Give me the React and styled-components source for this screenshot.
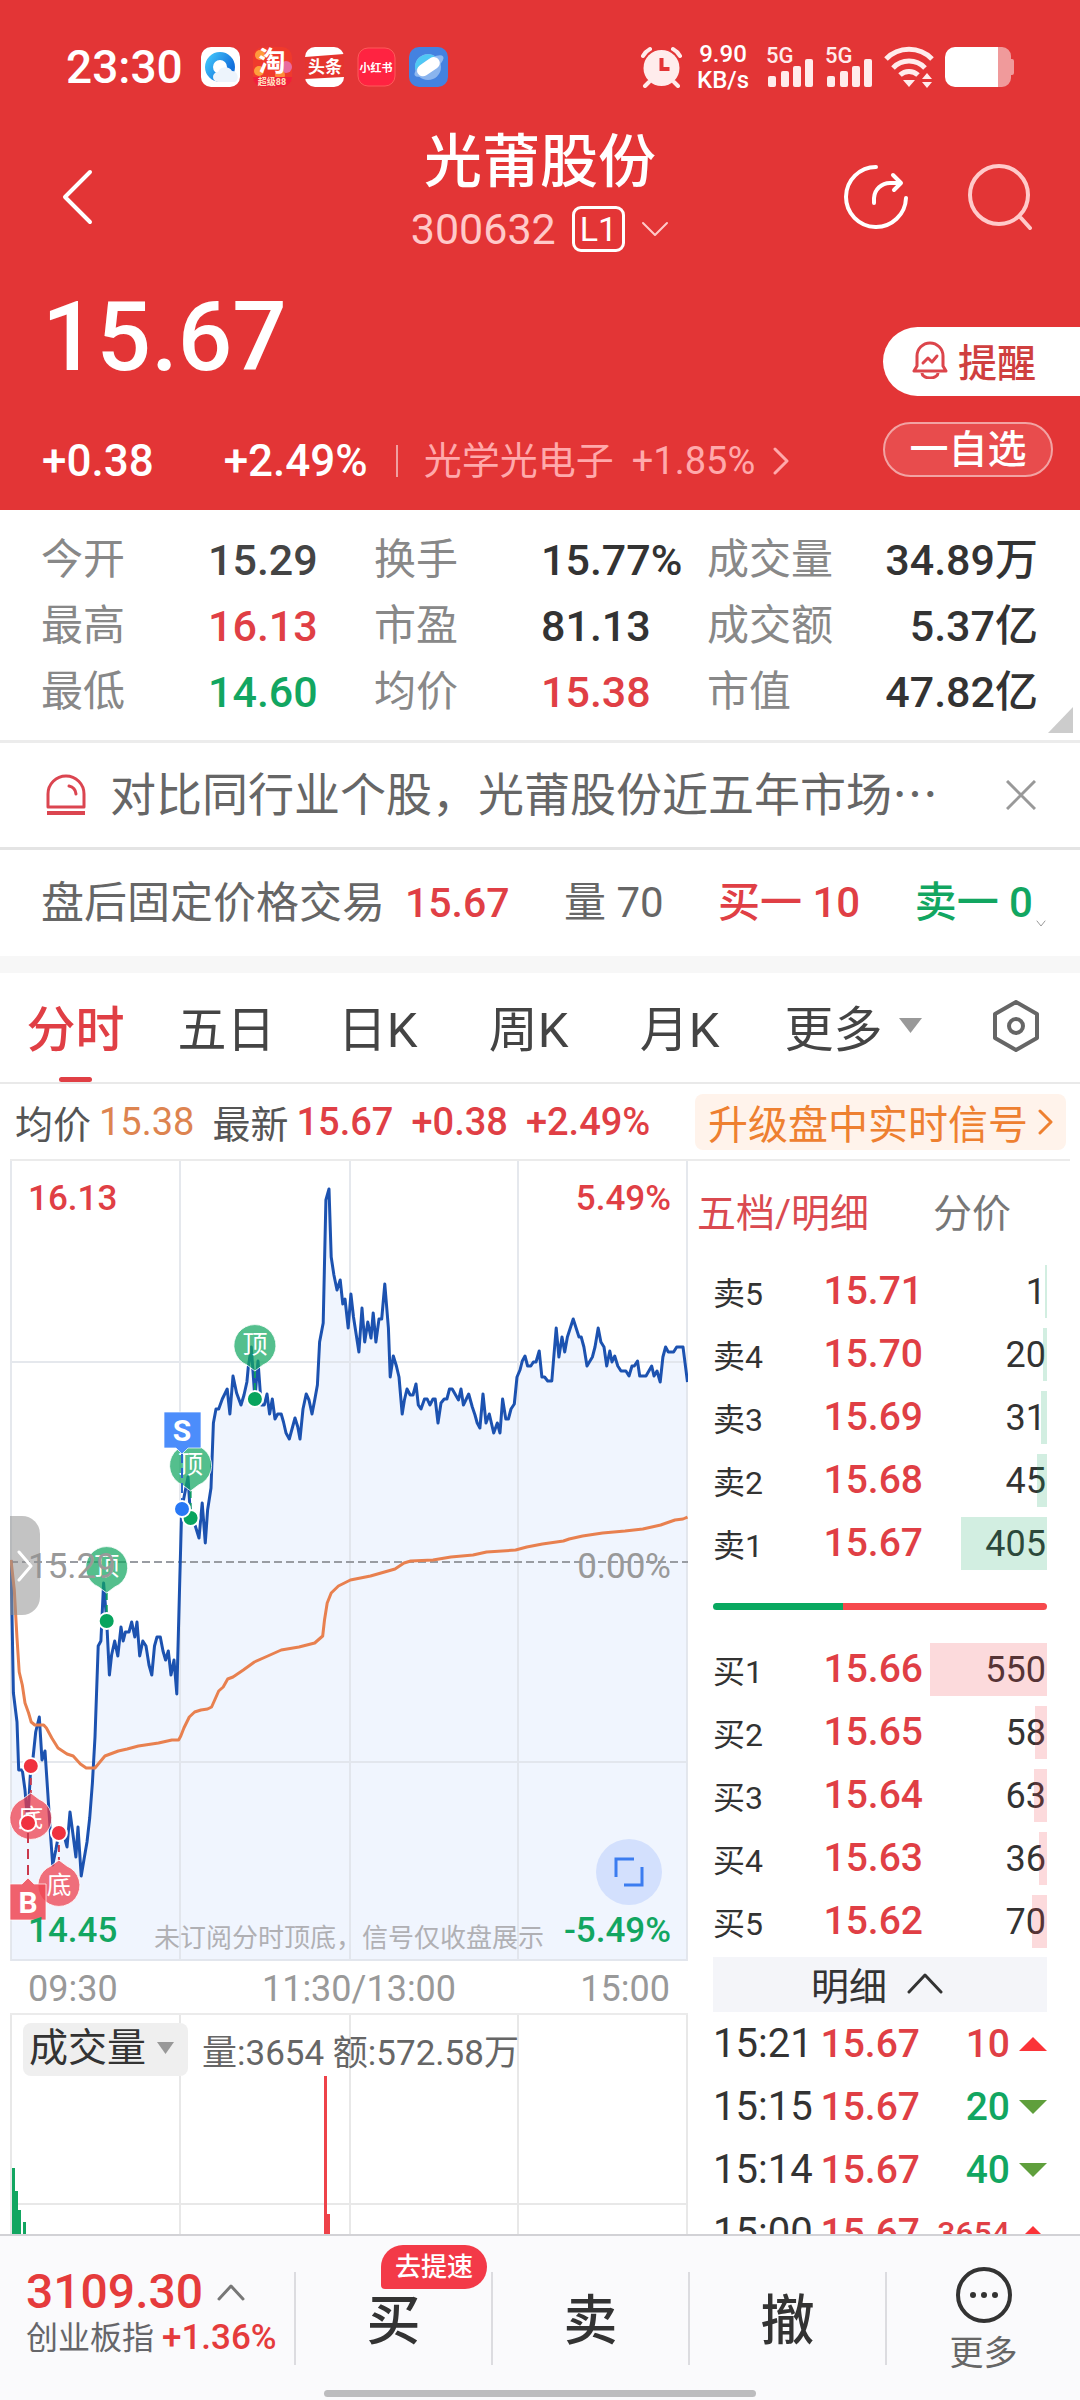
import React from 'react';
import styled, { createGlobalStyle } from 'styled-components';

const RED = '#e03f45';
const GREEN = '#12a661';

const GlobalStyle = createGlobalStyle`
  * {
    box-sizing: border-box;
  }

  body {
    margin: 0;
    background: #fff;
    color: #333;
    font-family: Roboto, 'Noto Sans CJK SC', sans-serif;
  }

  button, select {
    margin: 0;
    padding: 0;
    border: 0;
    background: none;
    color: inherit;
    font: inherit;
    cursor: pointer;
  }

  a {
    color: inherit;
    text-decoration: none;
  }

  svg {
    display: block;
    flex: none;
  }
`;

const Screen = styled.div`
  display: flex;
  flex-direction: column;
  height: 100vh;
`;

const Content = styled.main`
  flex: 1;
  min-height: 0;
  overflow: hidden;
`;

/* header */

const Header = styled.header`
  background: #e33536;
  color: #fff;
`;

const StatusBar = styled.div`
  display: flex;
  align-items: center;
  justify-content: space-between;
  padding: 40px 66px 32px;
`;

const StatusGroup = styled.div`
  display: flex;
  align-items: center;
  gap: ${({ $gap }) => $gap}px;
  height: 54px;
`;

const Clock = styled.time`
  margin-right: 5px;
  font-size: 46px;
  font-weight: 500;
`;

const NetSpeed = styled.div`
  margin: 0 6px 0 4px;
  font-size: 24px;
  font-weight: 500;
  line-height: 26px;
  text-align: center;
`;

const Nav = styled.nav`
  display: grid;
  grid-template-columns: 1fr auto 1fr;
  align-items: center;
  padding: 0 48px;
`;

const NavActions = styled.div`
  display: flex;
  justify-content: flex-end;
  gap: 60px;
`;

const IconButton = styled.button`
  display: flex;
  align-items: center;
`;

const BackButton = styled(IconButton)`
  padding-left: 14px;
`;

const Title = styled.div`
  padding-bottom: 8px;
  text-align: center;
`;

const StockName = styled.h1`
  margin: 0;
  font-size: 58px;
  font-weight: 500;
  line-height: 72px;
`;

const StockCode = styled.button`
  display: flex;
  align-items: center;
  justify-content: center;
  gap: 16px;
  width: 100%;
  color: #ffc9c9;
  font-size: 43px;
  line-height: 62px;
`;

const Level = styled.span`
  padding: 0 5px;
  border: 3px solid #fff;
  border-radius: 9px;
  color: #fff;
  font-size: 34px;
  line-height: 40px;
`;

const Quote = styled.section`
  display: flex;
  align-items: flex-start;
  justify-content: space-between;
  padding: 19px 0 25px 42px;
`;

const Price = styled.div`
  font-size: 96px;
  font-weight: 500;
  line-height: 100px;
`;

const Change = styled.div`
  display: flex;
  align-items: center;
  margin-top: 50px;
  font-size: 44px;
  font-weight: 500;
  line-height: 48px;

  span + span {
    margin-left: 70px;
  }
`;

const Sector = styled.a`
  display: flex;
  align-items: center;
  gap: 18px;
  height: 32px;
  margin-left: 28px;
  padding-left: 26px;
  border-left: 2px solid #f0a0a0;
  color: #ffa9ab;
  font-size: 38px;
  font-weight: 400;
`;

const QuoteActions = styled.div`
  display: flex;
  flex-direction: column;
  gap: 26px;
  width: 197px;
  margin-top: 40px;
`;

const RemindButton = styled.button`
  display: flex;
  align-items: center;
  gap: 10px;
  height: 69px;
  padding: 0 0 4px 29px;
  border-radius: 35px 0 0 35px;
  background: #fff;
  color: #cf3f3f;
  font-size: 39px;
  font-weight: 500;
`;

const WatchButton = styled.button`
  height: 55px;
  margin-right: 27px;
  border: 2px solid #f2a3a3;
  border-radius: 28px;
  background: #e84c4d;
  font-size: 39px;
  font-weight: 500;
  line-height: 50px;
`;

/* key figures */

const Stats = styled.dl`
  position: relative;
  display: grid;
  grid-template-columns: 333fr 333fr 331fr;
  margin: 0;
  padding: 17px 42px 15px 41px;
  border-bottom: 3px solid #ececec;
  line-height: 66px;
`;

const Stat = styled.div`
  display: grid;
  grid-template-columns: 167px 1fr;

  &:nth-child(3n) dd {
    text-align: right;
  }
`;

const StatName = styled.dt`
  color: #888;
  font-size: 42px;
`;

const StatValue = styled.dd`
  margin: 0;
  color: ${({ $color }) => $color || '#333'};
  font-size: 43px;
  font-weight: 500;
  white-space: nowrap;
`;

const Corner = styled.svg`
  position: absolute;
  right: 7px;
  bottom: 7px;
`;

const Notice = styled.section`
  display: flex;
  align-items: center;
  padding: 0 44px 0 45px;
  border-bottom: 3px solid #e4e4e4;
`;

const NoticeText = styled.p`
  flex: 1;
  margin: 0 0 0 23px;
  padding-bottom: 8px;
  color: #666;
  font-family: 'Noto Sans CJK SC', sans-serif;
  font-size: 46px;
  line-height: 96px;
`;

const AfterHours = styled.section`
  display: flex;
  align-items: center;
  justify-content: space-between;
  padding: 0 34px 0 41px;
  border-bottom: 17px solid #f7f7f7;
  color: #666;
  font-size: 42px;
  line-height: 106px;
`;

const FixedLabel = styled.span`
  display: flex;
  gap: 20px;
  font-size: 43px;
`;

const Figure = styled.span`
  color: ${({ $color }) => $color};
  font-weight: ${({ $color }) => ($color ? 500 : 400)};
`;

const FixedPrice = styled(Figure)`
  font-size: 41px;
`;

const FixedZero = styled.span`
  display: flex;
  align-items: center;
  gap: 3px;

  svg {
    margin-top: 40px;
  }
`;

/* period tabs */

const Tabs = styled.nav`
  display: grid;
  grid-template-columns: repeat(5, 151fr) 196fr 129fr;
  border-bottom: 2px solid #e9e9e9;
`;

const Tab = styled.button`
  display: flex;
  align-items: center;
  justify-content: center;
  gap: 16px;
  position: relative;
  height: 109px;
  padding-bottom: 4px;
  color: ${({ $active }) => ($active ? RED : '#444')};
  font-size: 49px;
  font-weight: ${({ $active }) => ($active ? 500 : 400)};

  &::after {
    content: '';
    display: ${({ $active }) => ($active ? 'block' : 'none')};
    position: absolute;
    bottom: 0;
    width: 33px;
    height: 5px;
    border-radius: 3px;
    background: ${RED};
  }
`;

const Summary = styled.div`
  display: flex;
  align-items: center;
  height: 75px;
  padding: 0 14px 0 15px;
  color: #555;
  font-size: 38px;
  white-space: nowrap;
`;

const SummaryValue = styled.span`
  margin-right: 18px;
  margin-left: ${({ $labelled }) => ($labelled ? 8 : 0)}px;
  color: ${({ $color }) => $color};
  font-weight: ${({ $bold }) => ($bold ? 500 : 400)};
`;

const Upgrade = styled.a`
  display: flex;
  align-items: center;
  gap: 10px;
  height: 56px;
  margin-left: auto;
  padding: 0 13px;
  border-radius: 8px;
  background: #fff3eb;
  color: #ee8030;
  font-size: 40px;
`;

/* chart and order book */

const Board = styled.div`
  display: grid;
  grid-template-columns: 678fr 382fr;
  margin: 0 10px;
  border-top: 2px solid #ebebeb;
`;

const ChartBox = styled.div`
  position: relative;
`;

const FullWidthSvg = styled.svg`
  width: 100%;
  height: auto;
`;

const Drawer = styled.button`
  display: flex;
  align-items: center;
  justify-content: center;
  position: absolute;
  top: 355px;
  left: 0;
  width: 30px;
  height: 99px;
  border-radius: 0 18px 18px 0;
  background: rgba(145, 145, 145, 0.55);
`;

const Expand = styled.button`
  display: flex;
  align-items: center;
  justify-content: center;
  position: absolute;
  right: 26px;
  bottom: 56px;
  width: 66px;
  height: 66px;
  border-radius: 50%;
  background: #d3e0fd;
`;

const TimeAxis = styled.div`
  display: flex;
  justify-content: space-between;
  padding: 4px 18px 0;
  border-bottom: 2px solid #ebebeb;
  color: #999;
  font-size: 36px;
  line-height: 48px;
`;

const MiddleTime = styled.time`
  margin-left: 20px;
`;

const VolumeHead = styled.div`
  display: flex;
  align-items: center;
  gap: 14px;
  position: absolute;
  top: 8px;
  left: 13px;
  color: #666;
  font-size: 35px;
  white-space: nowrap;
`;

const SelectWrap = styled.label`
  display: flex;
  align-items: center;
  gap: 10px;
  height: 53px;
  padding: 0 14px 3px 6px;
  border-radius: 8px;
  background: #efefef;
  color: #333;
`;

const IndicatorSelect = styled.select`
  appearance: none;
  font-size: 39px;
  outline: none;
`;

const Book = styled.aside`
  padding: 0 23px 0 25px;
`;

const BookTabs = styled.div`
  display: flex;
  gap: 64px;
  height: 99px;
  margin-left: -16px;
  padding-bottom: 2px;
`;

const BookTab = styled.button`
  color: ${({ $active }) => ($active ? '#da4a50' : '#777')};
  font-size: 39px;
  white-space: nowrap;
`;

const BookTable = styled.table`
  width: 100%;
  border-collapse: collapse;
  table-layout: fixed;
`;

const BookRow = styled.tr`
  height: 63px;
`;

const Side = styled.th`
  width: 88px;
  padding: 0 0 2px;
  font-size: 32px;
  font-weight: 400;
  text-align: left;
`;

const BookPrice = styled.td`
  width: 122px;
  padding: 0 0 2px;
  color: ${RED};
  font-size: 39px;
  font-weight: 500;
  text-align: right;
`;

const Amount = styled.td`
  position: relative;
  padding: 0 1px 0 0;
  font-size: 36px;
  text-align: right;
`;

const Depth = styled.span`
  position: absolute;
  top: 5px;
  right: 0;
  height: 53px;
  background: ${({ $buy }) => ($buy ? 'rgba(240, 60, 70, 0.19)' : 'rgba(18, 166, 97, 0.19)')};
`;

const Ratio = styled.div`
  height: 7px;
  margin: 28px 0;
  border-radius: 4px;
  background: linear-gradient(to right, #08a860 39%, #f6494d 39%);
`;

const DetailToggle = styled.button`
  display: flex;
  align-items: center;
  justify-content: center;
  gap: 20px;
  width: 100%;
  height: 55px;
  margin-top: 4px;
  padding: 0 6px 2px 0;
  background: #f4f5f9;
  font-size: 38px;
`;

const Tick = styled.tr`
  height: 63px;
  font-size: 39px;
  text-align: right;

  td {
    padding: 0;
    white-space: nowrap;
  }
`;

const TickTime = styled.td`
  width: 100px;
  font-size: 40px;
  text-align: left;
`;

const TickPrice = styled.td`
  width: 107px;
  color: ${RED};
  font-weight: 500;
`;

const TickAmount = styled.td`
  color: ${({ $up }) => ($up ? RED : GREEN)};
  font-size: ${({ $long }) => ($long ? 32 : 39)}px;
  font-weight: 500;
`;

const TickArrow = styled.td`
  width: 37px;

  svg {
    margin-left: 9px;
  }
`;

/* trade bar */

const TradeBar = styled.footer`
  position: relative;
  display: grid;
  grid-template-columns: 294fr repeat(3, 197fr) 195fr;
  height: 166px;
  padding-top: 36px;
  border-top: 2px solid #d2d2d6;
  background: #fafafc;
`;

const TradeCell = styled.div`
  display: flex;
  justify-content: center;
  position: relative;
  height: 93px;

  & + & {
    border-left: 2px solid #dcdce0;
  }
`;

const IndexLink = styled.a`
  display: block;
  width: 100%;
  padding-left: 26px;
  white-space: nowrap;
`;

const IndexPrice = styled.div`
  display: flex;
  align-items: center;
  gap: 14px;
  color: #e53b3c;
  font-size: 48px;
  font-weight: 500;
  line-height: 40px;
`;

const IndexName = styled.div`
  margin-top: 6px;
  color: #66666a;
  font-size: 32px;
  line-height: 40px;

  span {
    color: #e53b3c;
    font-size: 35px;
    font-weight: 500;
  }
`;

const TradeButton = styled.button`
  width: 100%;
  padding-bottom: 4px;
  font-size: 54px;
  font-weight: 500;
`;

const SpeedTag = styled.span`
  position: absolute;
  top: -27px;
  left: 85px;
  padding: 0 14px;
  border-radius: 22px 22px 22px 4px;
  background: #f33a48;
  color: #fff;
  font-size: 26px;
  font-weight: 500;
  line-height: 44px;
  white-space: nowrap;
`;

const MoreButton = styled.button`
  display: flex;
  flex-direction: column;
  align-items: center;
  align-self: flex-start;
  gap: 6px;
  margin-top: -5px;
  color: #666;
  font-size: 34px;
  line-height: 48px;
`;

const HomeBar = styled.div`
  position: absolute;
  bottom: 3px;
  left: 30%;
  width: 40%;
  height: 7px;
  border-radius: 4px;
  background: #bcbcbe;
`;

const stats = [
  ['今开', '15.29', '#444'],
  ['换手', '15.77%'],
  ['成交量', '34.89万'],
  ['最高', '16.13', RED],
  ['市盈', '81.13'],
  ['成交额', '5.37亿'],
  ['最低', '14.60', GREEN],
  ['均价', '15.38', RED],
  ['市值', '47.82亿'],
];

const asks = [
  ['卖5', '15.71', 1, 2],
  ['卖4', '15.70', 20, 4],
  ['卖3', '15.69', 31, 6],
  ['卖2', '15.68', 45, 10],
  ['卖1', '15.67', 405, 86],
];

const bids = [
  ['买1', '15.66', 550, 117],
  ['买2', '15.65', 58, 12],
  ['买3', '15.64', 63, 13],
  ['买4', '15.63', 36, 8],
  ['买5', '15.62', 70, 15],
];

const ticks = [
  ['15:21', '15.67', '10', true],
  ['15:15', '15.67', '20', false],
  ['15:14', '15.67', '40', false],
  ['15:00', '15.67', '3654', true],
];

const priceLine =
  '1,399 3.4,532 7,561 8.7,609 12.3,609 15,629 17.7,662 20.8,605 23,597 25.7,571 29.3,556 32,599 35,590 37.8,632 ' +
  '40.4,672 42.7,704 45.8,689 48.9,672 54.7,677 57,686 60,651 62.8,672 65.9,696 68,666 71.2,715 73.9,699 77,681 ' +
  '79.7,657 82.4,622 85,576 88.2,485 90.9,480 93.6,422 96.7,460 99.4,514 101.6,494 104.7,480 107.8,495 111,466 ' +
  '113.2,480 115.4,471 119,471 121.7,461 124.8,476 127,461 129.7,495 132.8,480 136,485 139,504 141.8,514 ' +
  '144.5,485 147,476 150.3,476 153,490 155.6,499 158.3,490 161,514 164,499 166.8,533 169.9,414 171.7,348 178,316 ' +
  '180.6,357 185,364 189,377 192.2,342 195.3,382 197.6,349 201,327 203.4,262 206,248 208.7,248 212.3,238 ' +
  '217.2,228 219.9,253 223,215 226.6,232 231,244 234,234 236.9,221 238.2,207 241.3,186 244.9,238 248,200 ' +
  '251.2,244 254.3,244 257,233 259.6,253 262.3,238 265,258 267.7,253 271.2,253 273.5,261 276,272 279.3,278 ' +
  '285,257 287.8,266 290,278 293,248 296.2,233 299,239 302,253 304.7,239 307.4,224 309.6,181 313.2,162 315.9,39 ' +
  '319,28 321.2,96 323.9,114 327,129 330.2,119 332.8,143 335,138 338.2,167 340.9,133 343.5,156 348.9,191 352,147 ' +
  '354.7,181 357.8,161 361,177 363.2,152 365.9,181 369,158 371.7,158 374.8,123 378.4,167 380.2,216 383.3,195 ' +
  '386.4,205 389,216 392.2,253 394.4,239 397,228 400.2,234 403,234 406,223 408.3,244 411,248 414.5,238 ' +
  '417.2,238 419.9,244 423,238 425.2,238 428,262 431,242 434.2,238 436.9,238 439.5,228 442.2,228 448.5,239 ' +
  '451,228 453.4,244 458.7,233 462.3,246 465,254 467.2,262 469.9,267 473,233 476,262 479.3,253 483.7,272 ' +
  '487.3,262 490,272 492.6,238 495.8,258 498.4,258 501,248 504.3,243 507,216 510,209 512.3,200 515,195 ' +
  '517.6,205 520.8,205 523.4,201 526,201 529.2,190 531.9,216 534.6,216 537.7,220 541.8,220 546.2,167 548.9,196 ' +
  '552,176 554.7,191 557.4,176 563.2,158 569,176 571.2,176 573.9,186 577,205 582.4,196 585,186 588.2,167 ' +
  '590.9,181 594,186 596.7,205 599.8,190 602,201 604.7,195 607.8,205 611,210 615.9,210 619,215 622,205 ' +
  '624.3,205 627.5,200 629.7,215 636,215 641.7,205 644,215 647,210 650.2,221 652.9,196 655.6,186 658.3,191 ' +
  '663.6,191 666.7,186 673,186 677.5,221';

const averageLine =
  '1,399 4.3,429 7,477 9.2,511 12.3,524 15,542 18.6,552 21.2,561 24.8,564 33.7,564 36.4,567 41.8,577 48,587 ' +
  '57,593 63.2,595 70.4,603 76.2,607 85,607 89.1,602 94.9,595 108.3,590 117.2,588 128.4,585 148.5,582 161.9,579 ' +
  '168.6,579 170.8,575 173.9,567 179.3,556 184.6,551 190.9,549 197.6,548 201.6,546 208.7,530 213.2,526 ' +
  '217.7,518 223,516 233.3,509 244.4,501 257.8,495 271.2,489 289,486 304.7,482 312.7,475 314.5,459 317.2,442 ' +
  '321.2,432 328.4,425 340.4,419 360.5,415 385,408 394,402 400.7,400 423,399 440.9,396 463,394 476.6,391 ' +
  '505.6,389 516.8,386 532.4,383 553.4,380 559.2,378 572.6,375 592.6,372 615,370 632.8,368 650.7,364 665,359 ' +
  '673,358 677.5,356';

const tops = [
  [244.9, 184, 238],
  [180.6, 304, 357],
  [96.7, 406, 460],
];

const bottoms = [
  [20.8, 658, 605],
  [48.9, 725, 672],
];

const Chevron = ({ w, h, points, color = 'currentColor', stroke = 3 }) => (
  <svg width={w} height={h} viewBox={`0 0 ${w} ${h}`} fill="none">
    <polyline points={points} stroke={color} strokeWidth={stroke} strokeLinecap="round" strokeLinejoin="round" />
  </svg>
);

const Triangle = ({ w, h, up, color = '#999' }) => (
  <svg width={w} height={h} viewBox={`0 0 ${w} ${h}`}>
    <polygon points={up ? `0,${h} ${w},${h} ${w / 2},0` : `0,0 ${w},0 ${w / 2},${h}`} fill={color} />
  </svg>
);

const AppIcons = () => (
  <>
    <svg width="39" height="40" viewBox="0 0 39 40">
      <defs>
        <linearGradient id="ring" x1="0" y1="0" x2="1" y2="0.6">
          <stop offset="0" stopColor="#3fc0f8" />
          <stop offset="1" stopColor="#1270dc" />
        </linearGradient>
      </defs>
      <rect width="39" height="40" rx="10" fill="#fff" />
      <circle cx="19" cy="20" r="11" fill="none" stroke="url(#ring)" strokeWidth="8" />
      <path d="M17 35a5 5 0 0 1 0-10 8 8 0 0 1 14-1 6 6 0 0 1 3 11z" fill="#edf4fc" />
    </svg>
    <svg width="39" height="40" viewBox="0 0 39 40">
      <rect width="39" height="40" rx="10" fill="#ef3a2c" />
      <circle cx="7" cy="8" r="5" fill="#ff9a3c" />
      <circle cx="33" cy="20" r="6" fill="#e86ba0" />
      <circle cx="6" cy="24" r="5" fill="#ffa03c" />
      <circle cx="27" cy="28" r="5" fill="#ff8a3c" />
      <path d="M0 30h39a10 10 0 0 1-10 10H10A10 10 0 0 1 0 30z" fill="#f01f3c" />
      <text x="19" y="24" fontSize="27" fontWeight="700" fill="#fff" textAnchor="middle">淘</text>
      <text x="19" y="38" fontSize="9" fontWeight="700" fill="#ffe3c0" textAnchor="middle">超级88</text>
    </svg>
    <svg width="39" height="40" viewBox="0 0 39 40">
      <rect width="39" height="40" rx="10" fill="#fff" />
      <path d="M0 10l39-3v23L0 32z" fill="#e5352f" />
      <text x="20" y="26" fontSize="17" fontWeight="700" fill="#fff" textAnchor="middle">头条</text>
    </svg>
    <svg width="39" height="40" viewBox="0 0 39 40">
      <rect x="1" y="1" width="37" height="38" rx="10" fill="#ff2341" stroke="#ff5a5a" />
      <text x="19" y="25" fontSize="11" fontWeight="700" fill="#fff" textAnchor="middle">小红书</text>
    </svg>
    <svg width="39" height="40" viewBox="0 0 39 40">
      <rect width="39" height="40" rx="10" fill="#4482e0" />
      <circle cx="19" cy="20" r="13" fill="#8ab4ee" />
      <path d="M6 21A13 13 0 0 1 28 11L8 27z" fill="#4fc8f4" />
      <ellipse cx="20" cy="19" rx="17" ry="6" fill="#8fb8f0" transform="rotate(-34 20 19)" />
      <rect x="7" y="14" width="25" height="12" rx="6" fill="#fff" transform="rotate(-34 19 20)" />
    </svg>
  </>
);

const AlarmIcon = () => (
  <svg width="41" height="42" viewBox="0 0 41 42">
    <path
      d="M2 10A17 17 0 0 1 9 3M39 10A17 17 0 0 0 32 3M8 36l-4 4M33 36l4 4"
      fill="none"
      stroke="#ffecec"
      strokeWidth="4"
      strokeLinecap="round"
    />
    <circle cx="20.500" cy="22" r="18" fill="#ffecec" />
    <path d="M20.500 12v11h8" fill="none" stroke="#e33536" strokeWidth="4" />
  </svg>
);

const Signal = () => (
  <svg width="48" height="54" viewBox="0 -6 48 54">
    <text x="0" y="17" fontSize="22" fontWeight="500" fill="#ffecec">5G</text>
    <g fill="#ffecec">
      <rect x="2" y="30" width="8" height="11" rx="2" />
      <rect x="15" y="25" width="8" height="16" rx="2" />
      <rect x="27" y="20" width="8" height="21" rx="2" />
      <rect x="39" y="13" width="8" height="28" rx="2" />
    </g>
  </svg>
);

const WifiIcon = () => (
  <svg width="50" height="42" viewBox="0 0 50 42" fill="none" stroke="#ffecec" strokeWidth="5">
    <path d="M2 13a32 32 0 0 1 46 0" />
    <path d="M9 22a22 22 0 0 1 32 0" />
    <path d="M16 29a13 13 0 0 1 18 0" />
    <path d="M19 34h12l-6 7z" fill="#ffecec" stroke="none" />
    <path d="M38 33l5-6 5 6zM38 36h10l-5 6z" fill="#ffecec" stroke="none" />
  </svg>
);

const BatteryIcon = () => (
  <svg width="69" height="40" viewBox="0 0 69 40">
    <path d="M53 0h4a9 9 0 0 1 9 9v3h1a2 2 0 0 1 2 2v12a2 2 0 0 1-2 2h-1v3a9 9 0 0 1-9 9h-4z" fill="#f09a9b" />
    <path d="M10 0h43v40H10A10 10 0 0 1 0 30V10A10 10 0 0 1 10 0z" fill="#fff" />
  </svg>
);

const ShareIcon = () => (
  <svg width="64" height="66" viewBox="0 0 64 66" fill="none" stroke="#fff" strokeWidth="4" strokeLinecap="round" strokeLinejoin="round">
    <path d="M32 3A30 30 0 1 0 62 34" />
    <path d="M30 39V34A16 16 0 0 1 46 19H56" />
    <path d="M49 11l8 8-7 7" />
  </svg>
);

const SearchIcon = () => (
  <svg width="64" height="66" viewBox="0 0 64 66" fill="none" stroke="#ffcaca" strokeWidth="4" strokeLinecap="round">
    <circle cx="31" cy="31" r="29" />
    <path d="M53 54l9 10" />
  </svg>
);

const BellIcon = () => (
  <svg width="36" height="38" viewBox="0 0 36 38" fill="none" stroke="#dc454b" strokeWidth="3" strokeLinejoin="round">
    <path d="M2 30h32l-3-5V15a13 13 0 0 0-26 0v10z" />
    <path d="M10 32a8 5 0 0 0 16 0" />
    <path d="M11 22l5-5 4 4 5-6" strokeLinecap="round" />
  </svg>
);

const SirenIcon = () => (
  <svg width="42" height="42" viewBox="0 0 42 42" fill="none" stroke="#db4550" strokeWidth="3">
    <path d="M3 33V20a18 18 0 0 1 36 0v13z" strokeLinejoin="round" />
    <path d="M24 12a9 9 0 0 1 7 8" strokeLinecap="round" />
    <path d="M2 39h38" strokeWidth="4" />
  </svg>
);

const SettingsIcon = () => (
  <svg width="48" height="52" viewBox="0 0 48 52" fill="none" stroke="#666" strokeWidth="4" strokeLinejoin="round">
    <path d="M24 2L45 14V38L24 50L3 38V14z" />
    <circle cx="24" cy="26" r="7" />
  </svg>
);

const Dot = ({ x, y, color }) => <circle cx={x} cy={y} r="8" fill={color} stroke="#fff" strokeWidth="2" />;

const TopMark = ({ x, y, dot }) => (
  <g>
    <line x1={x} y1={y + 26} x2={x} y2={dot} stroke="#0c9a63" strokeWidth="2" strokeDasharray="7 5" />
    <path
      d={`M${x - 8} ${y + 20}A21 21 0 1 1 ${x + 8} ${y + 20}L${x} ${y + 26}z`}
      fill="#12a661"
      fillOpacity="0.72"
      stroke="#fff"
      strokeOpacity="0.8"
    />
    <text x={x} y={y + 8} fontSize="25" fill="#fff" textAnchor="middle">顶</text>
    <Dot x={x} y={dot} color="#08a45e" />
  </g>
);

const BottomMark = ({ x, y, dot }) => (
  <g>
    <line x1={x} y1={dot} x2={x} y2={y - 26} stroke="#c9394d" strokeWidth="2" strokeDasharray="7 5" />
    <path
      d={`M${x - 8} ${y - 20}A21 21 0 1 0 ${x + 8} ${y - 20}L${x} ${y - 26}z`}
      fill="#ee3a48"
      fillOpacity="0.72"
      stroke="#fff"
      strokeOpacity="0.8"
    />
    <text x={x} y={y + 8} fontSize="25" fill="#fff" textAnchor="middle">底</text>
    <Dot x={x} y={dot} color="#f0323f" />
  </g>
);

const PriceChart = () => (
  <FullWidthSvg viewBox="0 0 678 800">
    <polygon points={`${priceLine} 677.5,800 1,800`} fill="#f0f5fe" />
    <g stroke="#dfe2e8" strokeOpacity="0.8" strokeWidth="2">
      <path d="M1 0V800M170 0V800M340 0V800M508 0V800M677 0V800M0 201H678M0 601H678M0 799H678" />
    </g>
    <line x1="0" y1="401" x2="678" y2="401" stroke="#999ca2" strokeWidth="2" strokeDasharray="8 4" />
    <polyline points={priceLine} fill="none" stroke="#1c52b0" strokeWidth="3" strokeLinejoin="round" />
    <polyline points={averageLine} fill="none" stroke="#e8804f" strokeWidth="3" strokeLinejoin="round" />

    {tops.map(([x, y, dot]) => (
      <TopMark key={x} x={x} y={y} dot={dot} />
    ))}
    {bottoms.map(([x, y, dot]) => (
      <BottomMark key={x} x={x} y={y} dot={dot} />
    ))}

    <line x1="172" y1="292" x2="172" y2="348" stroke="#2c66c8" strokeWidth="2" strokeDasharray="10 5" />
    <path d="M154 251h37v36h-13l-6 6l-6-6h-12z" fill="#4c8dfb" stroke="#fff" strokeOpacity="0.7" />
    <text x="172" y="280" fontSize="30" fontWeight="700" fill="#fff" textAnchor="middle">S</text>
    <Dot x={172} y={348} color="#2878f5" />

    <line x1="18" y1="672" x2="18" y2="717" stroke="#c9394d" strokeWidth="2" strokeDasharray="10 6" />
    <path d="M0 723h12l6-6l6 6h12v36h-36z" fill="#f04654" fillOpacity="0.85" stroke="#fff" strokeOpacity="0.7" />
    <text x="18" y="752" fontSize="30" fontWeight="700" fill="#fff" textAnchor="middle">B</text>
    <Dot x={18} y={662} color="#f0323f" />

    <g fontSize="35" fontWeight="500">
      <text x="18" y="49" fill={RED}>16.13</text>
      <text x="661" y="49" fill={RED} textAnchor="end">5.49%</text>
      <text x="18" y="417" fill="#999" fontWeight="400">15.29</text>
      <text x="661" y="417" fill="#999" fontWeight="400" textAnchor="end">0.00%</text>
      <text x="18" y="781" fill={GREEN}>14.45</text>
      <text x="661" y="781" fill={GREEN} textAnchor="end">-5.49%</text>
    </g>
    <text x="144" y="786" fontSize="26" fill="#b0b0b4">未订阅分时顶底，信号仅收盘展示</text>
  </FullWidthSvg>
);

const VolumeChart = () => (
  <FullWidthSvg viewBox="0 0 678 270">
    <path
      d="M1 0V270M170 0V270M340 0V270M508 0V270M677 0V270M0 189H678"
      stroke="#e8e8e8"
      strokeWidth="2"
    />
    <g fill="#12a661">
      <rect x="2" y="153" width="3" height="117" />
      <rect x="5" y="176" width="3" height="94" />
      <rect x="8" y="195" width="3" height="75" />
      <rect x="13" y="207" width="3" height="63" />
    </g>
    <g fill="#ee4249">
      <rect x="314" y="61" width="3" height="209" />
      <rect x="317" y="199" width="3" height="71" />
    </g>
  </FullWidthSvg>
);

const BookSide = ({ rows, buy }) => (
  <BookTable>
    <tbody>
      {rows.map(([side, price, amount, depth]) => (
        <BookRow key={side}>
          <Side scope="row">{side}</Side>
          <BookPrice>{price}</BookPrice>
          <Amount>
            {amount}
            <Depth $buy={buy} style={{ width: depth }} />
          </Amount>
        </BookRow>
      ))}
    </tbody>
  </BookTable>
);

const App = () => {
  return (
    <Screen>
      <GlobalStyle />
      <Content>
        <Header>
          <StatusBar>
            <StatusGroup $gap={13}>
              <Clock>23:30</Clock>
              <AppIcons />
            </StatusGroup>
            <StatusGroup $gap={11}>
              <AlarmIcon />
              <NetSpeed>
                9.90
                <br />
                KB/s
              </NetSpeed>
              <Signal />
              <Signal />
              <WifiIcon />
              <BatteryIcon />
            </StatusGroup>
          </StatusBar>

          <Nav>
            <BackButton aria-label="返回">
              <Chevron w={32} h={56} points="28,3 3,28 28,53" stroke={4} />
            </BackButton>
            <Title>
              <StockName>光莆股份</StockName>
              <StockCode>
                300632 <Level>L1</Level>
                <Chevron w={28} h={16} points="2,2 14,14 26,2" stroke={2} />
              </StockCode>
            </Title>
            <NavActions>
              <IconButton aria-label="分享">
                <ShareIcon />
              </IconButton>
              <IconButton aria-label="搜索">
                <SearchIcon />
              </IconButton>
            </NavActions>
          </Nav>

          <Quote>
            <div>
              <Price>15.67</Price>
              <Change>
                <span>+0.38</span>
                <span>+2.49%</span>
                <Sector href="#sector">
                  光学光电子
                  <div>+1.85%</div>
                  <Chevron w={17} h={28} points="2,2 14,14 2,26" />
                </Sector>
              </Change>
            </div>
            <QuoteActions>
              <RemindButton>
                <BellIcon />
                提醒
              </RemindButton>
              <WatchButton>一自选</WatchButton>
            </QuoteActions>
          </Quote>
        </Header>

        <Stats>
          {stats.map(([name, value, color]) => (
            <Stat key={name}>
              <StatName>{name}</StatName>
              <StatValue $color={color}>{value}</StatValue>
            </Stat>
          ))}
          <Corner width="25" height="26" viewBox="0 0 25 26">
            <polygon points="25,0 25,26 0,26" fill="#ccc" />
          </Corner>
        </Stats>

        <Notice>
          <SirenIcon />
          <NoticeText>对比同行业个股，光莆股份近五年市场…</NoticeText>
          <IconButton aria-label="关闭">
            <svg width="30" height="30" viewBox="0 0 30 30">
              <path d="M1 1L29 29M29 1L1 29" stroke="#999" strokeWidth="3" />
            </svg>
          </IconButton>
        </Notice>

        <AfterHours>
          <FixedLabel>
            盘后固定价格交易
            <FixedPrice $color={RED}>15.67</FixedPrice>
          </FixedLabel>
          <Figure>量 70</Figure>
          <Figure $color={RED}>买一 10</Figure>
          <FixedZero>
            <Figure $color={GREEN}>卖一 0</Figure>
            <Chevron w={10} h={7} points="1,1 5,6 9,1" stroke={1} color="#999" />
          </FixedZero>
        </AfterHours>

        <Tabs>
          <Tab $active>分时</Tab>
          <Tab>五日</Tab>
          <Tab>日K</Tab>
          <Tab>周K</Tab>
          <Tab>月K</Tab>
          <Tab>
            更多
            <Triangle w={23} h={15} />
          </Tab>
          <Tab aria-label="设置">
            <SettingsIcon />
          </Tab>
        </Tabs>

        <Summary>
          均价
          <SummaryValue $color="#dd8450" $labelled>15.38</SummaryValue>
          最新
          <SummaryValue $color={RED} $labelled $bold>15.67</SummaryValue>
          <SummaryValue $color={RED} $bold>+0.38</SummaryValue>
          <SummaryValue $color={RED} $bold>+2.49%</SummaryValue>
          <Upgrade href="#signal">
            升级盘中实时信号
            <Chevron w={15} h={26} points="2,2 13,13 2,24" />
          </Upgrade>
        </Summary>

        <Board>
          <div>
            <ChartBox>
              <PriceChart />
              <Drawer aria-label="展开侧栏">
                <Chevron w={16} h={32} points="2,2 14,16 2,30" color="#fff" />
              </Drawer>
              <Expand aria-label="全屏">
                <svg width="30" height="30" viewBox="0 0 30 30" fill="none" stroke="#3b7cf0" strokeWidth="3">
                  <path d="M2 20V2H20M10 28H28V10" />
                </svg>
              </Expand>
            </ChartBox>
            <TimeAxis>
              <time>09:30</time>
              <MiddleTime>11:30/13:00</MiddleTime>
              <time>15:00</time>
            </TimeAxis>
            <ChartBox>
              <VolumeChart />
              <VolumeHead>
                <SelectWrap>
                  <IndicatorSelect aria-label="指标">
                    <option>成交量</option>
                  </IndicatorSelect>
                  <Triangle w={17} h={12} />
                </SelectWrap>
                <span>量:3654 额:572.58万</span>
              </VolumeHead>
            </ChartBox>
          </div>

          <Book>
            <BookTabs>
              <BookTab $active>五档/明细</BookTab>
              <BookTab>分价</BookTab>
            </BookTabs>
            <BookSide rows={asks} />
            <Ratio />
            <BookSide rows={bids} buy />
            <DetailToggle>
              明细
              <Chevron w={36} h={21} points="2,19 18,2 34,19" />
            </DetailToggle>
            <BookTable>
              <tbody>
                {ticks.map(([time, price, amount, up]) => (
                  <Tick key={time}>
                    <TickTime>{time}</TickTime>
                    <TickPrice>{price}</TickPrice>
                    <TickAmount $up={up} $long={amount.length > 3}>
                      {amount}
                    </TickAmount>
                    <TickArrow>
                      <Triangle w={28} h={14} up={up} color={up ? '#fb3338' : '#5f9f3c'} />
                    </TickArrow>
                  </Tick>
                ))}
              </tbody>
            </BookTable>
          </Book>
        </Board>
      </Content>

      <TradeBar>
        <TradeCell>
          <IndexLink href="#index">
            <IndexPrice>
              3109.30
              <Chevron w={28} h={17} points="2,15 14,2 26,15" color="#777" />
            </IndexPrice>
            <IndexName>
              创业板指 <span>+1.36%</span>
            </IndexName>
          </IndexLink>
        </TradeCell>
        <TradeCell>
          <TradeButton>买</TradeButton>
          <SpeedTag>去提速</SpeedTag>
        </TradeCell>
        <TradeCell>
          <TradeButton>卖</TradeButton>
        </TradeCell>
        <TradeCell>
          <TradeButton>撤</TradeButton>
        </TradeCell>
        <TradeCell>
          <MoreButton>
            <svg width="56" height="56" viewBox="0 0 56 56">
              <circle cx="28" cy="28" r="26" fill="none" stroke="#333" strokeWidth="4" />
              <circle cx="17" cy="28" r="3" fill="#333" />
              <circle cx="28" cy="28" r="3" fill="#333" />
              <circle cx="39" cy="28" r="3" fill="#333" />
            </svg>
            更多
          </MoreButton>
        </TradeCell>
        <HomeBar />
      </TradeBar>
    </Screen>
  );
};

export default App;
